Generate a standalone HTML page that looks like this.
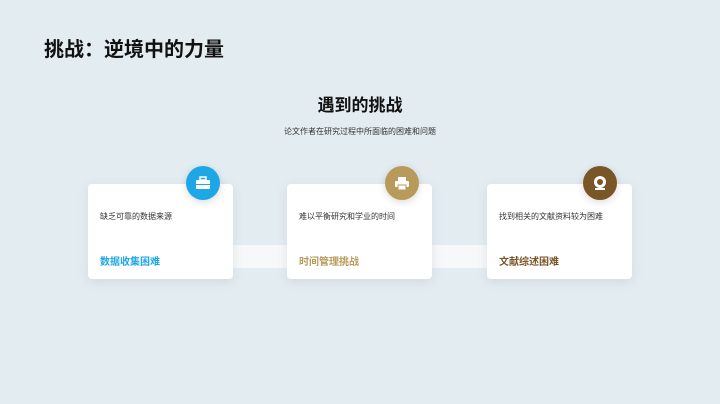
<!DOCTYPE html>
<html><head><meta charset="utf-8"><style>
*{margin:0;padding:0;box-sizing:border-box}
body{width:720px;height:404px;background:#e3ecf1;font-family:"Liberation Sans","Noto Sans CJK SC",sans-serif;position:relative;overflow:hidden}
.t{position:absolute;left:44px;top:33px;font-size:20px;font-weight:bold;color:#111}
.h{position:absolute;left:0;width:720px;top:91px;text-align:center;font-size:17px;font-weight:bold;color:#111}
.s{position:absolute;left:0;width:720px;top:126px;text-align:center;font-size:8px;color:#333}
.bar{position:absolute;top:245px;height:23px;background:#f6f8f9}
.card{position:absolute;top:184px;width:145px;height:95px;background:#fff;border-radius:4px;box-shadow:0 3px 10px rgba(120,140,155,.18)}
.card .d{position:absolute;left:12px;top:27px;font-size:8px;color:#333}
.card .l{position:absolute;left:12px;top:69px;font-size:10px;font-weight:bold}
.c{position:absolute;top:166px;width:34px;height:34px;border-radius:50%;display:flex;align-items:center;justify-content:center;box-shadow:0 2px 8px rgba(0,0,0,.15)}
</style></head><body>
<div class="t">挑战：逆境中的力量</div>
<div class="h">遇到的挑战</div>
<div class="s">论文作者在研究过程中所面临的困难和问题</div>
<div class="bar" style="left:232px;width:55px"></div>
<div class="bar" style="left:432px;width:55px"></div>
<div class="card" style="left:88px"><div class="d">缺乏可靠的数据来源</div><div class="l" style="color:#1ea7e4">数据收集困难</div></div>
<div class="card" style="left:287px"><div class="d">难以平衡研究和学业的时间</div><div class="l" style="color:#b89a5a">时间管理挑战</div></div>
<div class="card" style="left:487px"><div class="d">找到相关的文献资料较为困难</div><div class="l" style="color:#7a5528">文献综述困难</div></div>
<div class="c" style="left:186px;background:#1ea7e4"><svg width="16" height="14" viewBox="0 0 16 14"><rect x="5" y="1" width="6" height="3" fill="none" stroke="#fff" stroke-width="1.5"/><rect x="1" y="4" width="14" height="9" rx="1" fill="#fff"/><rect x="1" y="8" width="14" height="1" fill="#1ea7e4"/></svg></div>
<div class="c" style="left:385px;background:#b89a5a"><svg width="16" height="15" viewBox="0 0 16 15"><rect x="4" y="1" width="8" height="4" fill="#fff"/><rect x="1" y="5" width="14" height="6" rx="1" fill="#fff"/><rect x="4" y="9" width="8" height="5" fill="#fff" stroke="#b89a5a"/></svg></div>
<div class="c" style="left:583px;background:#7a5528"><svg width="16" height="16" viewBox="0 0 16 16"><circle cx="8" cy="7" r="6" fill="#fff"/><circle cx="8" cy="7" r="3" fill="#7a5528"/><rect x="3" y="13" width="10" height="2" fill="#fff"/></svg></div>
</body></html>
